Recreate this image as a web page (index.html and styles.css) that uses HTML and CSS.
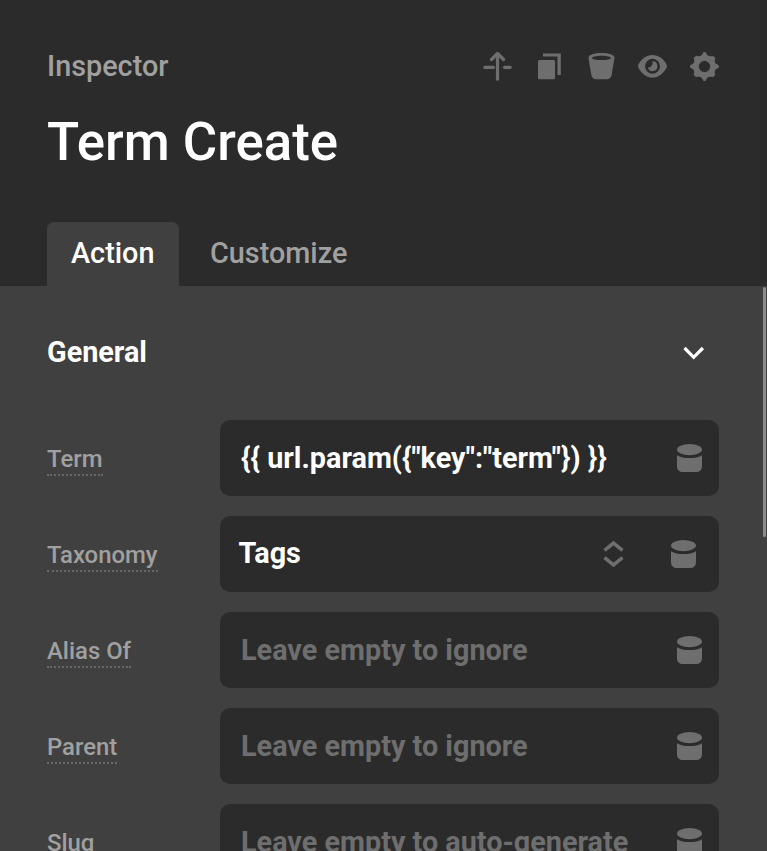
FILE: index.html
```html
<!DOCTYPE html>
<html lang="en">
<head>
    <meta charset="UTF-8">
    <meta name="viewport" content="width=device-width, initial-scale=1.0">
    <title>Inspector</title>
    <link rel="stylesheet" href="styles.css">
</head>
<body>

    <!-- shared icons -->
    <svg class="sprite" width="0" height="0">
        <symbol id="database" viewBox="0 0 25 28">
            <ellipse cx="12.500" cy="5.6" rx="12.500" ry="5.6"/>
            <path d="M0 11.200C3.100 13.200 7.400 14 12.500 14s9.400-.8 12.500-2.800V22.500a5.500 5.500 0 0 1-5.500 5.500H5.500A5.500 5.500 0 0 1 0 22.500z"/>
        </symbol>
    </svg>

    <!-- header -->
    <header class="header">
        <div class="topbar">
            <span class="panel-name">Inspector</span>
            <div class="actions">
                <svg width="29" height="30" viewBox=".5 0 29 30" fill="none" stroke="currentColor" stroke-width="3.200" stroke-linecap="round" stroke-linejoin="round">
                    <path d="M15 28.200V3M9 8.500l6-6 6 6M2.300 16.300H11M22 16.300h5.700"/>
                </svg>
                <svg width="29" height="30" viewBox=".5 0 29 30" fill="currentColor">
                    <rect x="3.500" y="9" width="17" height="19.300" rx="1.500"/>
                    <path d="M8.500 2.500H26.300V24H23V5.500H8.500z"/>
                </svg>
                <svg width="29" height="30" viewBox=".5 0 29 30" fill="currentColor">
                    <path fill-rule="evenodd" d="M15 2c7.500 0 13 1.800 13 4.800 0 1.200-1.900 11.200-2.700 16.500-.5 3.300-2.300 5-5.300 5h-10c-3 0-4.800-1.700-5.300-5C3.900 18 2 8 2 6.800 2 3.800 7.500 2 15 2zm0 2.700c-5.600 0-9.400 1-9.400 2.200S9.400 9.100 15 9.100s9.400-1 9.400-2.200S20.600 4.700 15 4.700z"/>
                </svg>
                <svg width="29" height="30" viewBox=".5 0 29 30" fill="currentColor">
                    <path fill-rule="evenodd" d="M15 4c6 0 10.800 3.700 13.700 8.800 1 1.700 1 3 0 4.600C25.800 22.500 21 26.500 15 26.500S4.200 22.500 1.300 17.400c-1-1.600-1-2.900 0-4.600C4.200 7.700 9 4 15 4zm0 3.700a7.500 7.500 0 1 0 0 15 7.500 7.500 0 0 0 0-15z"/>
                    <path d="M15 10.300a4.900 4.900 0 1 1-4.700 6.200c2.700.7 5.400-2.300 4.700-6.200z"/>
                </svg>
                <svg width="29" height="30" viewBox=".5 -.5 29 30" fill="currentColor" stroke="currentColor" stroke-linejoin="round">
                    <path fill-rule="evenodd" d="M14 1.100H16C17.300 4.800 19.500 5.900 23.400 4.700L25.300 6.600C24.100 10.500 25.200 12.700 28.900 14V16C25.200 17.300 24.100 19.500 25.300 23.400L23.400 25.300C19.500 24.100 17.300 25.200 16 28.900H14C12.700 25.200 10.500 24.100 6.600 25.300L4.700 23.400C5.900 19.500 4.800 17.300 1.100 16V14C4.800 12.700 5.900 10.500 4.700 6.600L6.600 4.700C10.500 5.900 12.700 4.800 14 1.100zM15 8.900a6.100 6.100 0 1 0 0 12.200 6.100 6.100 0 0 0 0-12.200z"/>
                </svg>
            </div>
        </div>
        <h1 class="title">Term Create</h1>
        <nav class="tabs">
            <a class="tab active">Action</a>
            <a class="tab">Customize</a>
        </nav>
    </header>

    <!-- settings panel -->
    <main class="panel">
        <div class="group-title">
            <h2>General</h2>
            <svg width="24" height="16" viewBox="0 0 24 16" fill="none" stroke="currentColor" stroke-width="3.200"><path d="M2.500 3l9.200 9.300L20.900 3"/></svg>
        </div>

        <div class="row">
            <div class="name"><span>Term</span></div>
            <div class="field">
                <span class="value">{{ url.param({"key":"term"}) }}</span>
                <svg class="db"><use href="#database"/></svg>
            </div>
        </div>
        <div class="row">
            <div class="name"><span>Taxonomy</span></div>
            <div class="field select">
                <span class="value">Tags</span>
                <svg class="arrows" width="21" height="28" viewBox="0 0 21 28" fill="none" stroke="currentColor" stroke-width="3.500"><path d="M1.500 10.300l9-7.200 9 7.200M1.500 17.700l9 7.200 9-7.200"/></svg>
                <svg class="db"><use href="#database"/></svg>
            </div>
        </div>
        <div class="row">
            <div class="name"><span>Alias Of</span></div>
            <div class="field">
                <span class="value empty">Leave empty to ignore</span>
                <svg class="db"><use href="#database"/></svg>
            </div>
        </div>
        <div class="row">
            <div class="name"><span>Parent</span></div>
            <div class="field">
                <span class="value empty">Leave empty to ignore</span>
                <svg class="db"><use href="#database"/></svg>
            </div>
        </div>
        <div class="row">
            <div class="name"><span>Slug</span></div>
            <div class="field">
                <span class="value empty">Leave empty to auto-generate</span>
                <svg class="db"><use href="#database"/></svg>
            </div>
        </div>

        <div class="scrollbar"></div>
    </main>

</body>
</html>
```
FILE: styles.css
```css
*{
    margin: 0;
    padding: 0;
    box-sizing: border-box;
}
body{
    font-family: Roboto, sans-serif;
    height: 100vh;
    display: flex;
    flex-direction: column;
    overflow: hidden;
    background: #404040;
    color: #fff;
}
svg{
    display: block;
    flex: none;
}
.sprite{
    position: absolute;
}

/* header */
.header{
    height: 286px;
    flex: none;
    padding: 46px 48px 0 47px;
    background: #2b2b2b;
    display: flex;
    flex-direction: column;
}
.topbar{
    display: flex;
    justify-content: space-between;
    align-items: center;
    height: 40px;
}
.panel-name{
    font-size: 28.8px;
    font-weight: 500;
    color: #a0a0a0;
}
.actions{
    display: flex;
    gap: 22.75px;
    color: #6e6e6e;
}
.title{
    margin-top: 22px;
    font-size: 52.8px;
    font-weight: 500;
    line-height: 68px;
}
.tabs{
    display: flex;
    margin-top: auto;
}
.tab{
    height: 64px;
    line-height: 62px;
    padding: 0 24px;
    border-radius: 7px 7px 0 0;
    font-size: 28.8px;
    font-weight: 500;
    color: #a0a0a0;
}
.tab + .tab{
    margin-left: 7px;
}
.tab.active{
    width: 132px;
    background: #404040;
    color: #fff;
}

/* panel */
.panel{
    flex: 1;
    min-height: 0;
    position: relative;
    padding: 0 48px 0 47px;
    overflow: hidden;
}
.group-title{
    display: flex;
    justify-content: space-between;
    align-items: center;
    height: 134px;
    padding-right: 13px;
}
.group-title h2{
    padding-bottom: 2px;
    font-size: 28.8px;
    font-weight: 700;
}
.row{
    display: flex;
    height: 76px;
    margin-bottom: 20px;
}
.name{
    width: 173px;
    padding-top: 22px;
}
.name span{
    display: inline-block;
    height: 34px;
    line-height: 34px;
    border-bottom: 2px dotted #686868;
    font-size: 23.9px;
    font-weight: 500;
    color: #a0a0a0;
}
.field{
    flex: 1;
    display: flex;
    align-items: center;
    padding: 0 17px 0 21px;
    border-radius: 10px;
    background: #2b2b2b;
}
.value{
    flex: 1;
    font-size: 28.8px;
    font-weight: 700;
    white-space: nowrap;
}
.select{
    padding: 0 23px 0 18.500px;
}
.select .value{
    padding-bottom: 2px;
}
.empty{
    color: #6e6e6e;
}
.arrows{
    margin-right: 47px;
    color: #6e6e6e;
}
.db{
    width: 25px;
    height: 28px;
    fill: #6e6e6e;
}
.scrollbar{
    position: absolute;
    top: 1px;
    right: 1px;
    width: 3px;
    height: 250px;
    border-radius: 2px;
    background: #8c8c8c;
}
```
